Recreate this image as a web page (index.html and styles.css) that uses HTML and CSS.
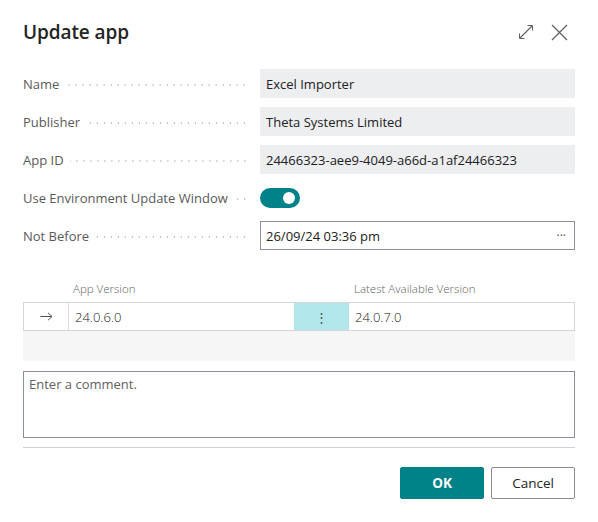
FILE: index.html
```html
<!DOCTYPE html>
<html>
<head>
<meta charset="utf-8">
<link rel="stylesheet" href="styles.css">
</head>
<body>
<div class="dialog">
  <div class="header">
    <h1 class="title">Update app</h1>
    <div class="header-icons">
      <svg class="icon" width="16" height="16" viewBox="0 0 16 16"><path d="M1.5 14.5 L14.5 1.5 M1.5 14.5 L1.5 9.5 M1.5 14.5 L6.5 14.5 M14.5 1.5 L9.5 1.5 M14.5 1.5 L14.5 6.5" fill="none" stroke="#616161" stroke-width="1.1"/></svg>
      <svg class="icon close" width="17" height="17" viewBox="0 0 17 17"><path d="M1 1 L16 16 M16 1 L1 16" fill="none" stroke="#616161" stroke-width="1.3"/></svg>
    </div>
  </div>

  <div class="fields">
    <div class="row"><div class="label"><span class="label-text">Name</span><span class="leader"></span></div><div class="value readonly">Excel Importer</div></div>
    <div class="row"><div class="label"><span class="label-text">Publisher</span><span class="leader"></span></div><div class="value readonly">Theta Systems Limited</div></div>
    <div class="row"><div class="label"><span class="label-text">App ID</span><span class="leader"></span></div><div class="value readonly">24466323-aee9-4049-a66d-a1af24466323</div></div>
    <div class="row"><div class="label"><span class="label-text">Use Environment Update Window</span><span class="leader"></span></div><div class="value"><span class="toggle"><span class="knob"></span></span></div></div>
    <div class="row"><div class="label"><span class="label-text">Not Before</span><span class="leader"></span></div><div class="value input"><span>26/09/24 03:36 pm</span><span class="more">···</span></div></div>
  </div>

  <div class="grid">
    <div class="grid-head">
      <div class="c-arrow"></div>
      <div class="c-app">App Version</div>
      <div class="c-menu"></div>
      <div class="c-latest">Latest Available Version</div>
    </div>
    <div class="grid-row">
      <div class="c-arrow cell"><svg width="13" height="9" viewBox="0 0 13 9"><path d="M0.5 4.5 H12 M8 0.8 L12 4.5 L8 8.2" fill="none" stroke="#505050" stroke-width="1"/></svg></div>
      <div class="c-app cell">24.0.6.0</div>
      <div class="c-menu cell menu">⋮</div>
      <div class="c-latest cell">24.0.7.0</div>
    </div>
    <div class="grid-empty"></div>
  </div>

  <div class="comment">Enter a comment.</div>

  <div class="footer">
    <button class="btn primary">OK</button>
    <button class="btn">Cancel</button>
  </div>
</div>
</body>
</html>
```

FILE: styles.css
```css
html, body {
  margin: 0;
  padding: 0;
  background: #ffffff;
}
body {
  font-family: "Open Sans", "Noto Sans", sans-serif;
  font-size: 13px;
  color: #212121;
}
.dialog {
  width: 598px;
  box-sizing: border-box;
  padding: 0 23px 0 23px;
}
.header {
  display: flex;
  align-items: center;
  justify-content: space-between;
  height: 62px;
  padding-top: 2px;
  box-sizing: border-box;
}
.title {
  margin: 0;
  font-size: 19px;
  font-weight: 600;
  color: #242424;
  letter-spacing: -0.1px;
}
.header-icons {
  display: flex;
  align-items: center;
  gap: 17px;
  margin-right: 7px;
}
.icon { display: block; }
.fields {
  display: flex;
  flex-direction: column;
  gap: 9px;
  margin-top: 7px;
}
.row {
  display: flex;
  align-items: center;
  height: 29px;
}
.label {
  width: 237px;
  display: flex;
  align-items: center;
  color: #5a5a5a;
  flex-shrink: 0;
}
.label-text {
  white-space: nowrap;
  margin-right: 6px;
}
.leader {
  flex: 1;
  height: 2px;
  margin-right: 12px;
  margin-top: 3px;
  background-image: radial-gradient(circle, #bdbdbd 0.8px, transparent 1px);
  background-size: 7px 2px;
  background-position: right center;
  background-repeat: repeat-x;
}
.value {
  flex: 1;
  height: 29px;
  display: flex;
  align-items: center;
  box-sizing: border-box;
  padding: 0 6px;
}
.readonly {
  background: #edeef0;
}
.value:not(.readonly):not(.input) {
  padding: 0;
}
.toggle {
  width: 40px;
  height: 20px;
  border-radius: 10px;
  background: #008388;
  position: relative;
  display: block;
}
.knob {
  position: absolute;
  width: 12px;
  height: 12px;
  border-radius: 50%;
  background: #ffffff;
  right: 5px;
  top: 4px;
}
.input {
  border: 1px solid #8a9099;
  padding: 0 8px 0 5px;
  justify-content: space-between;
}
.more {
  color: #505050;
  font-size: 12px;
}
.grid {
  margin-top: 27px;
}
.grid-head, .grid-row {
  display: grid;
  grid-template-columns: 44px 226px 55px 1fr;
}
.grid-head {
  height: 25px;
  align-items: center;
  padding-bottom: 2px;
  box-sizing: border-box;
  color: #616161;
  font-size: 11.5px;
  font-weight: 300;
}
.grid-head > div { padding-left: 6px; }
.grid-row {
  height: 29px;
  border: 1px solid #d6d6d6;
  box-sizing: border-box;
  background: #ffffff;
}
.cell {
  display: flex;
  align-items: center;
  padding-left: 6px;
  font-size: 13px;
  font-weight: 300;
  color: #212121;
  border-left: 1px solid #dedede;
}
.c-arrow.cell {
  border-left: none;
  justify-content: center;
  padding-left: 0;
}
.c-arrow.cell svg { display: block; }
.menu {
  background: #b1e7ea;
  justify-content: center;
  padding-left: 0;
  color: #505050;
  border-left: none;
}
.c-latest.cell { border-left: none; }
.grid-empty {
  height: 30px;
  background: #f6f6f7;
}
.comment {
  margin-top: 10px;
  height: 67px;
  border: 1px solid #8a9099;
  box-sizing: border-box;
  padding: 3px 5px;
  color: #616161;
}
.footer {
  margin-top: 9px;
  border-top: 1px solid #d1d1d1;
  display: flex;
  justify-content: flex-end;
  gap: 7px;
  padding-top: 19px;
}
.btn {
  width: 84px;
  height: 32px;
  font-family: "Open Sans", "Noto Sans", sans-serif;
  font-size: 13.5px;
  border: 1px solid #8a8a8a;
  border-radius: 2px;
  background: #ffffff;
  color: #242424;
}
.btn.primary {
  background: #008388;
  border-color: #008388;
  color: #ffffff;
  font-weight: 700;
}
```
